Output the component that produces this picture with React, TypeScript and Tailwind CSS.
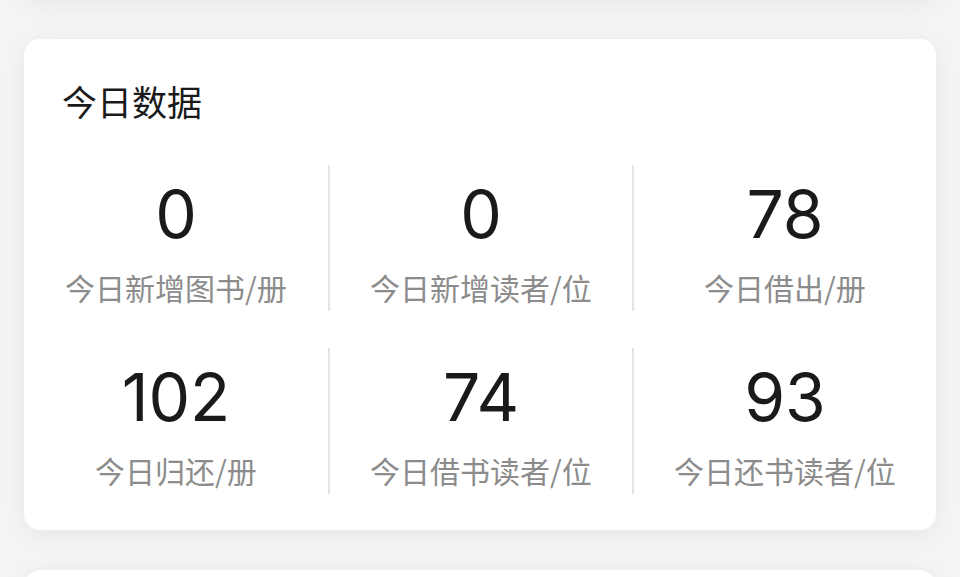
import React from 'react'

const stats = [
  { value: '0', label: '今日新增图书/册' },
  { value: '0', label: '今日新增读者/位' },
  { value: '78', label: '今日借出/册' },
  { value: '102', label: '今日归还/册' },
  { value: '74', label: '今日借书读者/位' },
  { value: '93', label: '今日还书读者/位' },
]

const font = { fontFamily: '"Noto Sans CJK SC", sans-serif' }

export default function App() {
  return (
    <div
      className="h-[577px] overflow-hidden bg-[#f4f4f6] px-6 flex flex-col gap-10"
      style={font}
    >
      {/* card above, mostly off screen */}
      <div className="-mt-[201px] h-[200px] shrink-0 rounded-[16px] bg-white shadow-[0_4px_24px_rgba(0,0,0,0.06)]" />

      <div className="shrink-0 rounded-[16px] bg-white pt-[45px] pb-[36px] shadow-[0_4px_24px_rgba(0,0,0,0.06)]">
        <h2 className="px-[38px] text-[35px] leading-[34px] text-[#1a1a1a] font-normal">
          今日数据
        </h2>

        <div className="mt-[47px] grid grid-cols-3 gap-y-[37px]">
          {stats.map((s, i) => (
            <div
              key={i}
              className={
                'h-[146px] flex flex-col items-center pt-[16px] ' +
                (i % 3 !== 0 ? 'border-l-2 border-[#e4e4e4]' : '')
              }
            >
              <div className="text-[66px] leading-[66px] text-[#1a1a1a] [font-family:Inter,sans-serif]">
                {s.value}
              </div>
              <div className="mt-[25px] text-[30px] leading-[30px] text-[#8c8c8c]">{s.label}</div>
            </div>
          ))}
        </div>
      </div>

      <div className="h-[200px] shrink-0 rounded-[16px] bg-white shadow-[0_4px_24px_rgba(0,0,0,0.06)]" />
    </div>
  )
}
